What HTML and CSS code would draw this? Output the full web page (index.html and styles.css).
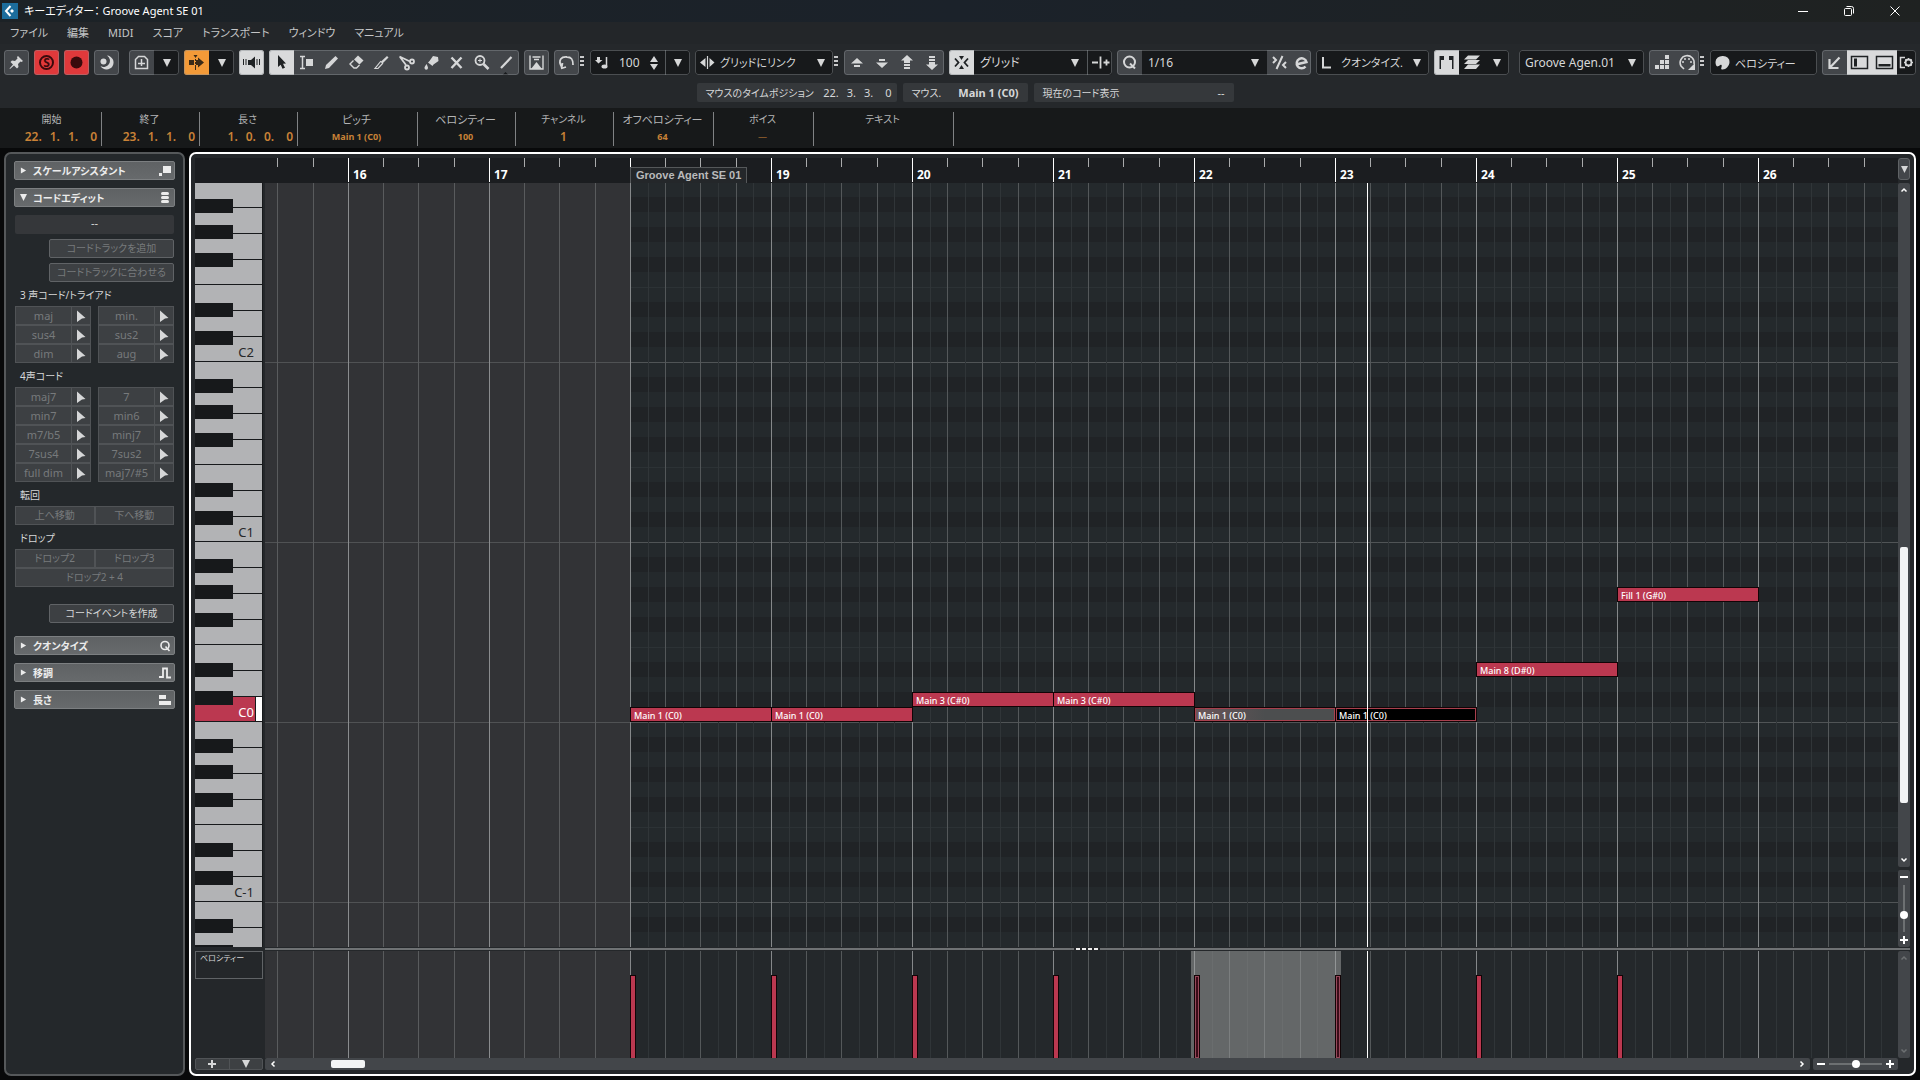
FILE: index.html
```html
<!DOCTYPE html>
<html lang="ja">
<head>
  <meta charset="UTF-8" />
  <meta name="viewport" content="width=device-width, initial-scale=1.0"/>
  <title>キーエディター： Groove Agent SE 01</title>
  <link rel="stylesheet" href="styles.css">
</head>
<body>

  <!-- Shared symbols -->
  <svg class="sprite" aria-hidden="true">
    <symbol id="down" viewBox="0 0 8 8"><path d="M0 0h8L4 8z"/></symbol>
    <symbol id="right" viewBox="0 0 8 8"><path d="M1 0.5L7 4 1 7.5z"/></symbol>
    <symbol id="pointer" viewBox="0 0 10 12"><path d="M1 0.500l8.500 7.500-3.500.5-5 3.500z"/></symbol>
    <symbol id="plus" viewBox="0 0 8 8"><path d="M3 0h2v3h3v2H5v3H3V5H0V3h3z"/></symbol>
    <symbol id="minus" viewBox="0 0 8 8"><path d="M0 3h8v2H0z"/></symbol>
    <symbol id="up-chev" viewBox="0 0 8 8"><path d="M1.5 5.5L4 3l2.500 2.500" fill="none" stroke="currentColor" stroke-width="1.500"/></symbol>
    <symbol id="down-chev" viewBox="0 0 8 8"><path d="M1.500 2.500L4 5l2.500-2.500" fill="none" stroke="currentColor" stroke-width="1.500"/></symbol>
  </svg>

  <header class="titlebar">
    <svg class="logo" viewBox="0 0 16 16">
      <rect width="16" height="16" fill="#1c6d9c"/>
      <path d="M8.500 3L4 8l4.500 5" fill="none" stroke="#fff" stroke-width="2"/>
      <path d="M10 6l2 2-2 2-2-2z" fill="#fff"/>
    </svg>
    <h1>キーエディター： Groove Agent SE 01</h1>
    <div class="window-buttons">
      <button aria-label="最小化"><svg viewBox="0 0 12 12"><path d="M1 6.500h10"/></svg></button>
      <button aria-label="元に戻す"><svg viewBox="0 0 12 12"><rect x="1.500" y="3.500" width="7" height="7" rx="1"/><path d="M3.500 1.500h5a2 2 0 0 1 2 2v5"/></svg></button>
      <button aria-label="閉じる"><svg viewBox="0 0 12 12"><path d="M1.500 1.500l9 9M10.500 1.500l-9 9"/></svg></button>
    </div>
  </header>

  <nav class="menubar">
    <a href="#">ファイル</a>
    <a href="#">編集</a>
    <a href="#">MIDI</a>
    <a href="#">スコア</a>
    <a href="#">トランスポート</a>
    <a href="#">ウィンドウ</a>
    <a href="#">マニュアル</a>
  </nav>

  <div class="toolbar">
    <div class="tool-row">
      <div class="group">
        <button aria-label="固定"><svg class="icon" viewBox="0 0 25 25"><path d="M14 6l5 5-1.500 1-1-.5-2.500 2.500.5 3-1.500 1.500-3-3L6 19l-.5-.5L9 14.500 6.500 12 8 10.500l3 .5L13.500 8.500 13 7z"/></svg></button>
      </div>
      <div class="group">
        <button class="red" aria-label="ソロ"><svg class="icon" viewBox="0 0 25 25"><circle cx="12.500" cy="12.500" r="6.500" fill="none" stroke="currentColor" stroke-width="2"/><text x="12.500" y="17" text-anchor="middle" font-size="12" font-weight="700">S</text></svg></button>
      </div>
      <div class="group">
        <button class="red" aria-label="録音"><svg class="icon" viewBox="0 0 25 25"><circle cx="12.500" cy="12.500" r="6"/></svg></button>
      </div>
      <div class="group">
        <button aria-label="レトロスペクティブ録音"><svg class="icon" viewBox="0 0 25 25"><path d="M13 5.500a7 7 0 1 1-6.500 10.500 6 6 0 0 0 6.500-10.500z"/><circle cx="9.500" cy="11.500" r="3"/></svg></button>
      </div>
      <div class="group group-spaced">
        <button aria-label="ビジビリティー"><svg class="icon" viewBox="0 0 25 25"><path d="M6.500 18.500v-9l3-3h6l3 3v9zM9 13.500h7M12.500 9v7" fill="none" stroke="currentColor" stroke-width="1.500"/></svg></button>
        <button class="dark" aria-label="開く"><svg class="tri"><use href="#down"/></svg></button>
      </div>
      <div class="group">
        <button class="orange" aria-label="自動スクロール"><svg class="icon" viewBox="0 0 25 25"><path d="M5 10h5v5H5zM14 10V7.500l6 5-6 5V15h-2v-5zM9.500 5h4l-2 3zM11 9h1v2h-1zM11 12h1v2h-1zM11 15h1v5h-1z"/></svg></button>
        <button class="dark" aria-label="開く"><svg class="tri"><use href="#down"/></svg></button>
      </div>
      <div class="group">
        <button class="on" aria-label="試聴"><svg class="icon" viewBox="0 0 25 25"><path d="M9 10h3l4-3.500v12L12 15H9zM4 9h1v6H4zM6.500 9h1v6h-1zM17.500 9h1v6h-1zM20 9h1v6h-1z"/></svg></button>
      </div>
      <div class="group">
        <button class="on" aria-label="オブジェクトの選択"><svg class="icon" viewBox="0 0 25 25"><path d="M9 5l8 8.500-3 .3 2 4-2.500 1-1.800-4L9 17z"/></svg></button>
        <button aria-label="範囲選択"><svg class="icon" viewBox="0 0 25 25"><path d="M6 6.500h5M8.500 6.500v12M6 18.500h5" fill="none" stroke="currentColor" stroke-width="1.500"/><rect x="12" y="9" width="7" height="7"/></svg></button>
        <button aria-label="鉛筆"><svg class="icon" viewBox="0 0 25 25"><path d="M6 19l1-4L16.500 6 19 8.500 10 18z"/></svg></button>
        <button aria-label="消しゴム"><svg class="icon" viewBox="0 0 25 25"><path d="M14 5.500l5.500 5-4 4-5.500-5z"/><path d="M9.500 10.500L6 14l4 4h2.500l3-3" fill="none" stroke="currentColor" stroke-width="1.400"/></svg></button>
        <button aria-label="トリム"><svg class="icon" viewBox="0 0 25 25"><path d="M18 6l1.500 1.500-6 6-2-1.500z"/><path d="M12 11l-6 7.500h3l5-5.500" fill="none" stroke="currentColor" stroke-width="1.200"/></svg></button>
        <button aria-label="はさみ"><svg class="icon" viewBox="0 0 25 25"><g fill="none" stroke="currentColor" stroke-width="1.800"><path d="M5.500 6.500L16 11.500M6 7l6 8"/><circle cx="18" cy="11.500" r="2"/><circle cx="13" cy="17.500" r="2"/></g></svg></button>
        <button aria-label="のり"><svg class="icon" viewBox="0 0 25 25"><path d="M14 6l5 1 .5 4-5 3.500-1 1.500-4.500-3.500 1.500-1.500zM7.500 14c-1.500 2.500-2 3-2 4a1.500 1.500 0 0 0 3.500 0c0-1-.5-2-1.500-4z"/></svg></button>
        <button aria-label="ミュート"><svg class="icon" viewBox="0 0 25 25"><path d="M7.500 7.500l10 10.500M17.500 7.500l-10 10.500" fill="none" stroke="currentColor" stroke-width="2.400"/></svg></button>
        <button aria-label="ズーム"><svg class="icon" viewBox="0 0 25 25"><g fill="none" stroke="currentColor"><circle cx="11" cy="10.500" r="4.500" stroke-width="1.800"/><path d="M14.500 14l5 5" stroke-width="2.600"/><path d="M9 10.500h4M11 8.500v4"/></g></svg></button>
        <button aria-label="ライン"><svg class="icon" viewBox="0 0 25 25"><path d="M7 18L17.500 7" stroke="currentColor" stroke-width="2.200"/><path d="M8.500 25l3-3 3 3z" fill="#17191b"/></svg></button>
      </div>
      <div class="group">
        <button aria-label="コントローラー"><svg class="icon" viewBox="0 0 25 25"><path d="M6 5.500v13.500h13V5.500M8.500 7h8M10 9.500h5" fill="none" stroke="currentColor" stroke-width="1.400"/><path d="M7 19l5.500-7 5.500 7z"/></svg></button>
      </div>
      <div class="group">
        <button aria-label="ループ"><svg class="icon" viewBox="0 0 25 25"><path d="M8 17.500c-5-8 0-11 5-10.500 5 0 6 3 6 8M7 18.500l5-1.500M7.500 18l1-5" fill="none" stroke="currentColor" stroke-width="1.800"/></svg></button>
      </div>
      <span class="dots"></span>

      <div class="group dark wide-velocity">
        <svg class="icon" viewBox="0 0 25 25"><path d="M7 7h3v3h2.500L8.500 13.500 5 10h2z"/><path d="M16.500 7v9" stroke="currentColor" stroke-width="1.500"/><ellipse cx="14.500" cy="16.500" rx="3" ry="2"/></svg>
        <input type="text" value="100" aria-label="挿入ベロシティー">
        <svg class="spin" viewBox="0 0 8 14"><path d="M4 0l4 6H0zM0 8h8l-4 6z"/></svg>
        <button class="dark split" aria-label="開く"><svg class="tri"><use href="#down"/></svg></button>
      </div>
      <div class="group dark select wide-link">
        <svg class="icon" viewBox="0 0 25 25"><path d="M12.500 6v13" stroke="currentColor" stroke-width="1.200"/><path d="M10.500 8v9L5 12.500zM14.500 8v9l5-4.500z"/></svg>
        <select class="kana" aria-label="長さクオンタイズ"><option>グリッドにリンク</option></select>
        <svg class="tri"><use href="#down"/></svg>
      </div>
      <span class="dots"></span>

      <div class="group">
        <button aria-label="上へ移動"><svg class="icon" viewBox="0 0 25 25"><path d="M7 13.500L13 8l6 5.500zM10 15h6v2h-6z"/></svg></button>
        <button aria-label="下へ移動"><svg class="icon" viewBox="0 0 25 25"><path d="M7 12.500h12L13 18zM10 9h6v2h-6z"/></svg></button>
        <button aria-label="1オクターブ上へ"><svg class="icon" viewBox="0 0 25 25"><path d="M7 10.500L13 5l6 5.500h-3V13h-6v-2.500zM10 14h6v2h-6zM10 17h6v2h-6z"/></svg></button>
        <button aria-label="1オクターブ下へ"><svg class="icon" viewBox="0 0 25 25"><path d="M7 14.500L13 20l6-5.500h-3V12h-6v2.500zM10 9h6v2h-6zM10 6h6v2h-6z"/></svg></button>
      </div>
      <div class="group dark select wide-snap">
        <button class="on" aria-label="スナップ"><svg class="icon" viewBox="0 0 25 25"><path d="M10 6h5l-2.500 4zM10 19h5l-2.500-4z"/><path d="M6 8.500l3.500 4L6 16.500M19 8.500l-3.500 4 3.500 4" fill="none" stroke="currentColor" stroke-width="1.800"/></svg></button>
        <select aria-label="スナップタイプ"><option>グリッド</option></select>
        <svg class="tri"><use href="#down"/></svg>
        <button class="dark split" aria-label="ゼロクロス"><svg class="icon" viewBox="0 0 25 25"><path d="M4 12.500h6M12.500 6.500v12M15.500 12.500h6M18.500 9.500v6" fill="none" stroke="currentColor" stroke-width="1.800"/></svg></button>
      </div>
      <div class="group dark select wide-quantize">
        <button class="plain" aria-label="クオンタイズを適用"><svg class="icon" viewBox="0 0 25 25"><circle cx="12.500" cy="12" r="5.500" fill="none" stroke="currentColor" stroke-width="2"/><path d="M13 13.500l5 5" stroke="currentColor" stroke-width="2"/></svg></button>
        <select aria-label="クオンタイズプリセット"><option>1/16</option></select>
        <svg class="tri"><use href="#down"/></svg>
        <button class="plain narrow" aria-label="ソフトクオンタイズ"><svg class="icon" viewBox="0 0 25 25"><path d="M15.500 6L9.500 19M6 7l3 3-3 3M19 12l-3 3 3 3" fill="none" stroke="currentColor" stroke-width="2"/></svg></button>
        <button class="plain narrow" aria-label="クオンタイズパネルを開く"><svg class="icon" viewBox="0 0 25 25"><path d="M7 14.500l10.500-2.500a5 5 0 1 0-1 4.500" fill="none" stroke="currentColor" stroke-width="2.400"/></svg></button>
      </div>
      <div class="group dark select wide-length">
        <svg class="icon" viewBox="0 0 25 25"><path d="M7 7v10.500h8" fill="none" stroke="currentColor" stroke-width="2"/></svg>
        <select class="kana" aria-label="長さ"><option>クオンタイズ.</option></select>
        <svg class="tri"><use href="#down"/></svg>
      </div>
      <div class="group dark">
        <button class="on" aria-label="パートの境界線"><svg class="icon" viewBox="0 0 25 25"><path d="M5.500 19V6H10v4H7v9zM19.500 19V6H15v4h3v9z"/></svg></button>
        <button aria-label="レイヤー"><svg class="icon" viewBox="0 0 25 25"><path d="M9 5.500h12l-4 4H5zM9 10h12l-4 4H5zM9 14.500h12l-4 4.500H5z"/></svg></button>
        <button aria-label="開く"><svg class="tri"><use href="#down"/></svg></button>
      </div>
      <div class="group dark select wide-part">
        <select aria-label="編集中のパート"><option>Groove Agen.01</option></select>
        <svg class="tri"><use href="#down"/></svg>
      </div>
      <div class="group">
        <button aria-label="ステップ入力"><svg class="icon" viewBox="0 0 25 25"><path d="M6 15h4v4H6zM11 15h4v4h-4zM16 15h4v4h-4zM11 10h4v4h-4zM16 10h4v4h-4zM16 5h4v4h-4z"/></svg></button>
        <button aria-label="MIDI入力"><svg class="icon" viewBox="0 0 25 25"><path d="M10 19l-3-3a7 7 0 1 1 13-2" fill="none" stroke="currentColor" stroke-width="1.600"/><circle cx="9" cy="12" r="1"/><circle cx="11" cy="9" r="1"/><circle cx="15" cy="9" r="1"/><circle cx="17" cy="12" r="1"/><path d="M21 13v7h-7z"/></svg></button>
      </div>
      <span class="dots"></span>

      <div class="group dark wide-colors">
        <svg class="icon" viewBox="0 0 25 25"><path d="M13 6a6.500 5.500 0 0 1 6.500 6c0 4-4 8-7.500 7.500-2-.5.500-3-.5-4.500-1.500-1-2 1.500-3.500 1.500S5.500 15 5.500 12A7 6 0 0 1 13 6z"/><circle cx="9" cy="17.500" r="1.500" fill="#17191b"/></svg>
        <input class="kana" type="text" value="ベロシティー" aria-label="イベントの色">
      </div>
      <div class="group zones">
        <button aria-label="下ゾーンで開く"><svg class="icon" viewBox="0 0 25 25"><path d="M17.500 7.500L8.500 17M7.500 9v9h9" fill="none" stroke="currentColor" stroke-width="2.200"/></svg></button>
        <button class="on" aria-label="左ゾーン"><svg class="icon" viewBox="0 0 25 25"><rect x="4.500" y="6.500" width="16" height="12" fill="none" stroke="currentColor" stroke-width="1.500"/><path d="M7 8.500h3v8H7z"/></svg></button>
        <button class="on" aria-label="下ゾーン"><svg class="icon" viewBox="0 0 25 25"><rect x="4.500" y="6.500" width="16" height="12" fill="none" stroke="currentColor" stroke-width="1.500"/><path d="M6.500 14h12v2.500h-12z"/></svg></button>
        <button class="dark setup" aria-label="ウィンドウレイアウトの設定"><svg class="icon" viewBox="4 0 19 25"><path d="M12 7.500H7.500v10H12" fill="none" stroke="currentColor" stroke-width="1.500"/><circle cx="15.500" cy="12.500" r="3" fill="none" stroke="currentColor" stroke-width="2"/><path d="M15.500 8v9M11 12.500h9M12.300 9.300l6.400 6.400M18.700 9.300l-6.400 6.400" stroke="currentColor" stroke-width="1.200"/><circle cx="15.500" cy="12.500" r="2" fill="#17191b"/></svg></button>
      </div>
    </div>

    <div class="status-row">
      <div class="status status-wide"><span class="label">マウスのタイムポジション</span><span class="pos"><span>22.</span><span>3.</span><span>3.</span><span>0</span></span></div>
      <div class="status status-mid"><span class="label">マウス.</span><b>Main 1 (C0)</b></div>
      <div class="status status-wide"><span class="label">現在のコード表示</span><span>--</span></div>
    </div>
  </div>

  <!-- Info line -->
  <dl class="info-line">
    <div class="w-time"><dt>開始</dt><dd class="pos"><span>22.</span><span>1.</span><span>1.</span><span>0</span></dd></div>
    <div class="w-time"><dt>終了</dt><dd class="pos"><span>23.</span><span>1.</span><span>1.</span><span>0</span></dd></div>
    <div class="w-time"><dt>長さ</dt><dd class="pos"><span>1.</span><span>0.</span><span>0.</span><span>0</span></dd></div>
    <div class="w-pitch"><dt class="big">ピッチ</dt><dd class="small">Main 1 (C0)</dd></div>
    <div class="w-time"><dt class="big">ベロシティー</dt><dd class="small">100</dd></div>
    <div class="w-time"><dt>チャンネル</dt><dd>1</dd></div>
    <div class="w-off"><dt class="big">オフベロシティー</dt><dd class="small">64</dd></div>
    <div class="w-off"><dt>ボイス</dt><dd class="none">—</dd></div>
    <div class="w-text"><dt>テキスト</dt><dd></dd></div>
  </dl>

  <main class="workspace">
    <aside class="inspector">
      <button class="section"><svg class="tri"><use href="#right"/></svg>スケールアシスタント<svg class="mark" viewBox="0 0 12 12"><path d="M4 1h8v7H4zM0 8h3v3H0z"/></svg></button>
      <button class="section"><svg class="tri"><use href="#down"/></svg>コードエディット<svg class="mark" viewBox="0 0 12 12"><rect x="2" y="0" width="8" height="3" rx="1.500"/><rect x="2" y="4" width="8" height="3" rx="1.500"/><rect x="2" y="8" width="8" height="3" rx="1.500"/></svg></button>

      <div class="chord">
        <div class="chord-name">--</div>
        <button class="wide" disabled>コードトラックを追加</button>
        <button class="wide" disabled>コードトラックに合わせる</button>

        <h2>3 声コード/トライアド</h2>
        <div class="pairs">
          <div class="cell"><button disabled>maj</button><button aria-label="maj を適用"><svg><use href="#pointer"/></svg></button></div>
          <div class="cell"><button disabled>min.</button><button aria-label="min を適用"><svg><use href="#pointer"/></svg></button></div>
          <div class="cell"><button disabled>sus4</button><button aria-label="sus4 を適用"><svg><use href="#pointer"/></svg></button></div>
          <div class="cell"><button disabled>sus2</button><button aria-label="sus2 を適用"><svg><use href="#pointer"/></svg></button></div>
          <div class="cell"><button disabled>dim</button><button aria-label="dim を適用"><svg><use href="#pointer"/></svg></button></div>
          <div class="cell"><button disabled>aug</button><button aria-label="aug を適用"><svg><use href="#pointer"/></svg></button></div>
        </div>

        <h2>4声コード</h2>
        <div class="pairs">
          <div class="cell"><button disabled>maj7</button><button aria-label="maj7 を適用"><svg><use href="#pointer"/></svg></button></div>
          <div class="cell"><button disabled>7</button><button aria-label="7 を適用"><svg><use href="#pointer"/></svg></button></div>
          <div class="cell"><button disabled>min7</button><button aria-label="min7 を適用"><svg><use href="#pointer"/></svg></button></div>
          <div class="cell"><button disabled>min6</button><button aria-label="min6 を適用"><svg><use href="#pointer"/></svg></button></div>
          <div class="cell"><button disabled>m7/b5</button><button aria-label="m7/b5 を適用"><svg><use href="#pointer"/></svg></button></div>
          <div class="cell"><button disabled>minj7</button><button aria-label="minj7 を適用"><svg><use href="#pointer"/></svg></button></div>
          <div class="cell"><button disabled>7sus4</button><button aria-label="7sus4 を適用"><svg><use href="#pointer"/></svg></button></div>
          <div class="cell"><button disabled>7sus2</button><button aria-label="7sus2 を適用"><svg><use href="#pointer"/></svg></button></div>
          <div class="cell"><button disabled>full dim</button><button aria-label="full dim を適用"><svg><use href="#pointer"/></svg></button></div>
          <div class="cell"><button disabled>maj7/#5</button><button aria-label="maj7/#5 を適用"><svg><use href="#pointer"/></svg></button></div>
        </div>

        <h2>転回</h2>
        <div class="joined"><button disabled>上へ移動</button><button disabled>下へ移動</button></div>

        <h2>ドロップ</h2>
        <div class="joined"><button disabled>ドロップ2</button><button disabled>ドロップ3</button><button class="full" disabled>ドロップ2 + 4</button></div>

        <button class="wide create">コードイベントを作成</button>
      </div>

      <button class="section"><svg class="tri"><use href="#right"/></svg>クオンタイズ<svg class="mark" viewBox="0 0 12 12"><circle cx="6" cy="5.500" r="4" fill="none" stroke="currentColor" stroke-width="1.600"/><path d="M6.500 6.500l4 4.500" stroke="currentColor" stroke-width="1.600"/></svg></button>
      <button class="section"><svg class="tri"><use href="#right"/></svg>移調<svg class="mark" viewBox="0 0 12 12"><path d="M0 10h4V1.500h4V10.500h4" fill="none" stroke="currentColor" stroke-width="1.800"/></svg></button>
      <button class="section"><svg class="tri"><use href="#right"/></svg>長さ<svg class="mark" viewBox="0 0 12 12"><path d="M0 1h7v4H0zM0 7h12v4H0z"/></svg></button>
    </aside>

    <section class="editor">
      <!-- Ruler -->
      <div class="ruler">
        <div class="bar lead"></div>
        <div class="bar">16</div>
        <div class="bar">17</div>
        <div class="bar part-start"><span class="part-name">Groove Agent SE 01</span></div>
        <div class="bar">19</div>
        <div class="bar">20</div>
        <div class="bar">21</div>
        <div class="bar">22</div>
        <div class="bar">23</div>
        <div class="bar">24</div>
        <div class="bar">25</div>
        <div class="bar rest">26</div>
      </div>
      <button class="ruler-menu" aria-label="ルーラーメニュー"><svg><use href="#down"/></svg></button>

      <!-- Piano keyboard -->
      <div class="keyboard">
        <div class="octave first"><span>C2</span></div>
        <div class="octave"><span>C1</span></div>
        <div class="octave playing"><i class="pressed"></i><i class="velocity"></i><span>C0</span></div>
        <div class="octave"><span>C-1</span></div>
        <div class="octave last"></div>
      </div>

      <div class="notes">
        <div class="before"></div>
        <div class="inside"></div>
        <div class="note n18">Main 1 (C0)</div>
        <div class="note n19">Main 1 (C0)</div>
        <div class="note n20">Main 3 (C#0)</div>
        <div class="note n21">Main 3 (C#0)</div>
        <div class="note n22 selected">Main 1 (C0)</div>
        <div class="note n23 current">Main 1 (C0)</div>
        <div class="note n24">Main 8 (D#0)</div>
        <div class="note n25">Fill 1 (G#0)</div>
        <div class="playhead"></div>
      </div>

      <div class="side-scroll">
        <div class="vscroll">
          <svg><use href="#up-chev"/></svg>
          <div class="thumb"></div>
          <svg><use href="#down-chev"/></svg>
        </div>
        <div class="vzoom">
          <svg><use href="#minus"/></svg>
          <input type="range" min="0" max="100" value="67" aria-label="垂直ズーム">
          <svg><use href="#plus"/></svg>
        </div>
      </div>

      <div class="splitter"></div>

      <!-- Velocity lane -->
      <div class="lane-head">ベロシティー</div>
      <div class="lane">
        <div class="before"></div>
        <div class="inside"></div>
        <div class="selection"></div>
        <div class="stick n18"></div>
        <div class="stick n19"></div>
        <div class="stick n20"></div>
        <div class="stick n21"></div>
        <div class="stick n22 hollow"></div>
        <div class="stick n23 hollow"></div>
        <div class="stick n24"></div>
        <div class="stick n25"></div>
        <div class="playhead"></div>
      </div>
      <div class="lane-scroll"><svg><use href="#up-chev"/></svg><svg><use href="#down-chev"/></svg></div>

      <div class="lane-buttons">
        <button aria-label="レーンを追加"><svg><use href="#plus"/></svg></button>
        <button aria-label="レーンメニュー"><svg><use href="#down"/></svg></button>
      </div>
      <div class="bottom-scroll">
        <div class="hscroll">
          <svg class="turn"><use href="#up-chev"/></svg>
          <div class="thumb"></div>
          <svg class="turn"><use href="#down-chev"/></svg>
        </div>
        <div class="hzoom">
          <svg><use href="#minus"/></svg>
          <input type="range" min="0" max="100" value="51" aria-label="水平ズーム">
          <svg><use href="#plus"/></svg>
        </div>
      </div>
    </section>
  </main>

</body>
</html>
```
FILE: styles.css
```css
* {
  margin: 0;
  padding: 0;
  box-sizing: border-box;
}

body {
  min-height: 100vh;
  display: flex;
  flex-direction: column;
  background: #08090a;
  color: #d6d7d8;
  font-family: "Noto Sans", "Noto Sans CJK JP", sans-serif;
  font-size: 11px;
  line-height: 16px;
  font-feature-settings: "palt";
  overflow: hidden;
}

button,
input,
select {
  font: inherit;
  font-feature-settings: inherit;
  color: inherit;
  background: none;
  border: none;
  border-radius: 0;
  appearance: none;
  outline: none;
}

svg {
  display: block;
  fill: currentColor;
}

.sprite {
  position: absolute;
  width: 0;
  height: 0;
}

/* Title and menu */
.titlebar {
  height: 22px;
  display: flex;
  align-items: center;
  gap: 6px;
  padding: 0 2px;
  background: linear-gradient(90deg, #1c2226, #1b222a 50%, #1f2221);
}

.logo {
  width: 16px;
  height: 16px;
}

.titlebar h1 {
  color: #fff;
  font-size: 11px;
  font-weight: 400;
}

.window-buttons {
  display: flex;
  margin-left: auto;
  color: #fff;
}

.window-buttons button {
  width: 46px;
  height: 22px;
  display: grid;
  place-items: center;
}

.window-buttons svg {
  width: 12px;
  height: 12px;
  fill: none;
  stroke: currentColor;
}

.menubar {
  height: 22px;
  display: flex;
  align-items: center;
  gap: 19px;
  padding-left: 10px;
  background: #232629;
}

.menubar a {
  color: #c4c5c6;
  text-decoration: none;
}

/* Toolbar */
.toolbar {
  display: flex;
  flex-direction: column;
  gap: 8px;
  padding: 6px 4px;
  background: #25282b;
}

.tool-row {
  display: flex;
  gap: 5px;
  height: 25px;
}

.group {
  position: relative;
  display: flex;
  align-items: center;
  flex: none;
  height: 25px;
  background: #43464a;
  border-radius: 3px;
  overflow: hidden;
}

.group::after {
  content: "";
  position: absolute;
  inset: 0;
  border: 1px solid rgba(140, 144, 148, 0.45);
  border-radius: 3px;
  pointer-events: none;
}

.group-spaced {
  margin-left: 5px;
}

.group button {
  width: 25px;
  height: 25px;
  display: grid;
  place-items: center;
  flex: none;
}

.icon {
  width: 25px;
  height: 25px;
  flex: none;
}

.tri {
  width: 8px;
  height: 8px;
  flex: none;
}

.dark,
.group .dark {
  background: #17191b;
}

.group .plain {
  background: #43464a;
}

.group .narrow {
  width: 22px;
}

.group .on {
  background: #d9dadb;
  color: #1f2224;
}

.group .red {
  background: #e0393b;
  color: #3a0a0c;
}

.group .orange {
  background: #f39a38;
  color: #3a2a17;
}

.group .split {
  border-left: 1px solid #55595c;
}

.dots {
  width: 4px;
  height: 12px;
  margin: 6px 1px 0 -4px;
  background: repeating-linear-gradient(#c9cacb 0 2px, transparent 2px 4px);
}

.group input,
.group select {
  flex: 1;
  min-width: 0;
  height: 25px;
  font-size: 12px;
}

.group .kana {
  font-size: 11px;
}

.select .tri {
  margin-right: 8px;
}

.spin {
  width: 8px;
  height: 14px;
  margin-right: 7px;
}

.wide-velocity {
  width: 100px;
}

.wide-velocity input {
  padding-left: 4px;
}

.wide-link {
  width: 138px;
}

.wide-snap {
  width: 163px;
}

.wide-quantize {
  width: 194px;
}

.wide-length {
  width: 113px;
}

.wide-snap select,
.wide-quantize select,
.wide-part select {
  padding-left: 6px;
}

.wide-part {
  width: 125px;
  margin-left: 5px;
}

.wide-colors {
  width: 107px;
}

.group .setup,
.setup .icon {
  width: 19px;
}

.zones {
  margin-left: auto;
}

.status-row {
  display: flex;
  justify-content: center;
  gap: 6px;
  padding-left: 10px;
}

.status {
  height: 19px;
  display: flex;
  align-items: center;
  justify-content: space-between;
  padding: 0 9px;
  background: #35383b;
  border-radius: 2px;
}

.status .label {
  font-size: 10px;
}

.status-wide {
  width: 200px;
}

.status-wide .pos {
  margin-right: -4px;
}

.status-mid {
  width: 125px;
}

.pos {
  display: flex;
  gap: 8px;
  justify-content: flex-end;
}

.pos span:last-child {
  margin-left: 4px;
}

/* Info line */
.info-line {
  height: 40px;
  display: flex;
  padding: 4px 4px 2px;
  background: #17191a;
}

.info-line > div {
  border-right: 1px solid #808284;
  padding-right: 2px;
  text-align: center;
  color: #b4b5b6;
}

.info-line dt {
  font-size: 10px;
  line-height: 15px;
}

.info-line .big {
  font-size: 11px;
}

.info-line dd {
  color: #c98237;
  font-size: 12px;
  font-weight: 600;
  line-height: 20px;
}

.info-line .pos {
  padding-right: 2px;
}

.info-line .small {
  font-size: 9px;
  font-weight: 700;
}

.info-line .none {
  font-size: 9px;
  font-weight: 400;
}

.w-time {
  width: 98px;
}

.w-pitch {
  width: 120px;
}

.w-off {
  width: 100px;
}

.w-text {
  width: 140px;
}

/* Workspace */
.workspace {
  flex: 1;
  display: flex;
  gap: 4px;
  padding: 4px;
}

.inspector {
  width: 181px;
  padding: 7px 8px;
  border: 2px solid #55585a;
  border-radius: 7px;
  background: #24282b;
}

.section {
  width: 100%;
  height: 19px;
  display: flex;
  align-items: center;
  gap: 6px;
  margin-bottom: 8px;
  padding: 0 3px 0 5px;
  border: 1px solid #7c7f81;
  border-radius: 2px;
  background: linear-gradient(#5f6264, #676a6c);
  color: #ececec;
  font-size: 10px;
  font-weight: 600;
}

.section .tri {
  width: 7px;
  height: 7px;
}

.mark {
  width: 12px;
  height: 12px;
  margin-left: auto;
}

.chord {
  display: flex;
  flex-direction: column;
  padding: 0 1px;
  margin-bottom: 13px;
}

.chord-name {
  height: 19px;
  margin-bottom: 5px;
  background: #35373a;
  border-radius: 2px;
  text-align: center;
}

.chord button {
  height: 19px;
  background: #3d4043;
  border: 1px solid #505356;
  color: #d6d7d8;
  line-height: 15px;
}

.chord button:disabled {
  color: #777a7c;
}

.chord .wide {
  align-self: flex-end;
  width: 125px;
  margin-bottom: 5px;
  border-color: #606366;
  border-radius: 2px;
  font-size: 10px;
}

.chord .wide + h2 {
  margin-top: -5px;
}

.chord .create {
  margin: 17px 0 0;
}

.chord h2 {
  height: 24px;
  padding-left: 5px;
  font-size: 10px;
  font-weight: 400;
  line-height: 27px;
}

.pairs {
  display: grid;
  grid-template-columns: 1fr 1fr;
  column-gap: 7px;
}

.cell {
  display: flex;
}

.cell button:first-child {
  flex: 1;
  border-right: none;
}

.cell button:last-child {
  width: 20px;
  display: grid;
  place-items: center;
}

.cell svg {
  width: 10px;
  height: 12px;
}

.joined {
  display: grid;
  grid-template-columns: 1fr 1fr;
}

.joined button {
  font-size: 10px;
}

.joined .full {
  grid-column: 1 / 3;
}

/* Editor */
.editor {
  flex: 1;
  min-width: 0;
  display: grid;
  grid-template-columns: 68px 1fr 12px;
  grid-template-rows: 25px 1fr 4px 107px 12px;
  padding: 4px;
  border: 2px solid #fff;
  border-radius: 7px;
  background: #24272a;
}

.ruler {
  grid-column: 1 / 3;
  display: flex;
  padding-left: 70px;
  background: #1b1d20;
  overflow: hidden;
}

.bar {
  width: 141px;
  flex: none;
  padding: 8px 0 0 5px;
  color: #fff;
  font-size: 12px;
  font-weight: 700;
  line-height: 17px;
  background:
    linear-gradient(#fff, #fff) 0 0 / 1px 24px no-repeat,
    linear-gradient(90deg, transparent 35px, #aaabac 35px 36px, transparent 36px 70px, #aaabac 70px 71px, transparent 71px 106px, #aaabac 106px 107px, transparent 107px) 0 0 / 141px 9px no-repeat;
}

.bar.lead {
  width: 83px;
  background-position: -141px 0, right 0 top 0;
}

.bar.rest {
  flex: 1;
}

.bar.part-start {
  display: flex;
  align-items: flex-end;
  padding: 0;
  background-size: 1px 9px, 141px 9px;
}

.part-name {
  height: 16px;
  padding: 0 5px;
  border: 1px solid #55585a;
  border-bottom: none;
  background: #24272a;
  color: #b9babb;
  font-family: "Liberation Sans", sans-serif;
  font-size: 11px;
  font-weight: 700;
  line-height: 15px;
}

.ruler-menu {
  height: 22px;
  display: grid;
  place-items: center;
  border: 1px solid #606366;
  border-radius: 3px;
  background: #43464a;
}

.ruler-menu svg {
  width: 7px;
  height: 7px;
}

.keyboard {
  grid-row: 2;
  grid-column: 1;
  width: 68px;
  display: flex;
  flex-direction: column;
  overflow: hidden;
  border-right: 1px solid #17191b;
}

.octave {
  position: relative;
  flex: none;
  height: 180px;
  background:
    linear-gradient(transparent 17px, #17191b 17px 31px, transparent 31px 43px, #17191b 43px 57px, transparent 57px 71px, #17191b 71px 85px, transparent 85px 121px, #17191b 121px 135px, transparent 135px 149px, #17191b 149px 163px, transparent 163px) left bottom / 38px 180px no-repeat,
    linear-gradient(#b2b3b5 25px, #17191b 25px 26px, #b2b3b5 26px 51px, #17191b 51px 52px, #b2b3b5 52px 77px, #17191b 77px 78px, #b2b3b5 78px 102px, #17191b 102px 103px, #b2b3b5 103px 128px, #17191b 128px 129px, #b2b3b5 129px 154px, #17191b 154px 155px, #b2b3b5 155px 179px, #17191b 179px) left bottom / 100% 180px no-repeat;
}

.octave.first {
  height: 179px;
}

.octave.last {
  flex: 1;
  background-position: left top;
}

.octave span {
  position: absolute;
  right: 8px;
  bottom: 1px;
  color: #26282a;
  font-size: 13px;
  line-height: 17px;
}

.octave.playing span {
  color: #fff;
}

/* White key with the notch of the black key above it */
.pressed {
  position: absolute;
  left: 0;
  bottom: 1px;
  width: 60px;
  height: 24px;
  background: #bb3850;
  clip-path: polygon(38px 0, 100% 0, 100% 100%, 0 100%, 0 8px, 38px 8px);
}

.velocity {
  position: absolute;
  right: 0;
  bottom: 1px;
  width: 7px;
  height: 24px;
  border-left: 1px solid #17191b;
  background: #fff;
}

.notes,
.lane {
  grid-column: 2;
  position: relative;
  display: flex;
  margin-left: 2px;
  overflow: hidden;
}

.notes {
  grid-row: 2;
}

.lane {
  grid-row: 4;
}

.before {
  width: 365px;
}

.inside {
  flex: 1;
}

.notes .before {
  background:
    linear-gradient(90deg, #8a8c8e 1px, transparent 1px 35px, #595b5d 35px 36px, transparent 36px 70px, #595b5d 70px 71px, transparent 71px 106px, #595b5d 106px 107px, transparent 107px) right top / 141px 100%,
    linear-gradient(#505254 1px, transparent 1px) 0 -1px / 100% 180px,
    #323336;
}

.notes .inside {
  background:
    linear-gradient(90deg, #85888a 1px, transparent 1px 18px, #303538 18px 19px, transparent 19px 35px, #54585a 35px 36px, transparent 36px 53px, #303538 53px 54px, transparent 54px 70px, #54585a 70px 71px, transparent 71px 88px, #303538 88px 89px, transparent 89px 106px, #54585a 106px 107px, transparent 107px 123px, #303538 123px 124px, transparent 124px) left top / 141px 100%,
    linear-gradient(#505456 1px, #24292c 1px 15px, #202326 15px 30px, #24292c 30px 45px, #202326 45px 60px, #24292c 60px 75px, #202326 75px 90px, #24292c 90px 105px, #2c3235 105px 106px, #24292c 106px 120px, #202326 120px 135px, #24292c 135px 150px, #202326 150px 165px, #24292c 165px) 0 -1px / 100% 180px;
}

.lane .before {
  background:
    linear-gradient(90deg, #8a8c8e 1px, transparent 1px 35px, #595b5d 35px 36px, transparent 36px 70px, #595b5d 70px 71px, transparent 71px 106px, #595b5d 106px 107px, transparent 107px) right top / 141px 100%,
    #323336;
}

.lane .inside {
  background:
    linear-gradient(90deg, #85888a 1px, transparent 1px 18px, #303538 18px 19px, transparent 19px 35px, #54585a 35px 36px, transparent 36px 53px, #303538 53px 54px, transparent 54px 70px, #54585a 70px 71px, transparent 71px 88px, #303538 88px 89px, transparent 89px 106px, #54585a 106px 107px, transparent 107px 123px, #303538 123px 124px, transparent 124px) left top / 141px 100%,
    #24282b;
}

/* One bar is 141px wide, one semitone 15px high */
.n18 { left: 365px; top: 524px; }
.n19 { left: 506px; top: 524px; }
.n20 { left: 647px; top: 509px; }
.n21 { left: 788px; top: 509px; }
.n22 { left: 929px; top: 524px; }
.n23 { left: 1070px; top: 524px; }
.n24 { left: 1211px; top: 479px; }
.n25 { left: 1352px; top: 404px; }

.note {
  position: absolute;
  width: 142px;
  height: 15px;
  padding-left: 3px;
  border: 1px solid #120406;
  background: #bb3850;
  color: #fff;
  font-size: 9px;
  font-weight: 500;
  line-height: 15px;
}

.note.selected,
.note.current {
  background: linear-gradient(90deg, #6b5659, #4c4e4f 50%);
  box-shadow: inset 0 0 0 1px #a8404e;
}

.note.current {
  background: #000;
}

.playhead {
  position: absolute;
  left: 1102px;
  top: 0;
  bottom: 0;
  width: 1px;
  background: #fff;
}

.stick {
  position: absolute;
  top: 24px;
  bottom: 0;
  width: 6px;
  border: 1px solid #120406;
  border-bottom: none;
  background: #bb3850;
}

.stick.hollow {
  background: #3a0c18;
  box-shadow: inset 0 0 0 1px #96485a;
}

.selection {
  position: absolute;
  left: 926px;
  top: 0;
  bottom: 0;
  width: 150px;
  background: rgba(160, 161, 162, 0.52);
}

.splitter {
  grid-row: 3;
  grid-column: 2 / 4;
  height: 2px;
  margin: 1px 0 1px 2px;
  background:
    linear-gradient(#24272a, #24272a) 809px 0 / 2px 2px no-repeat,
    repeating-linear-gradient(90deg, #eee 0 4px, #24272a 4px 6px) 811px 0 / 24px 2px no-repeat,
    #6f7274;
}

.lane-head {
  grid-row: 4;
  grid-column: 1;
  height: 28px;
  padding-left: 4px;
  border: 1px solid #606366;
  font-size: 8px;
  line-height: 12px;
}

/* Scroll bars */
.side-scroll {
  grid-row: 2;
  grid-column: 3;
  display: flex;
  flex-direction: column;
  gap: 3px;
}

.vscroll,
.vzoom,
.lane-scroll {
  display: flex;
  flex-direction: column;
  align-items: center;
  justify-content: space-between;
  padding: 3px 0;
  border-radius: 2px;
  background: #43464a;
}

.lane-scroll {
  grid-row: 4;
  grid-column: 3;
}

.vscroll svg,
.vzoom svg,
.hscroll svg,
.hzoom svg,
.lane-scroll svg {
  width: 8px;
  height: 8px;
  color: #fff;
  flex: none;
}

.lane-scroll svg {
  color: #6d7072;
}

.vscroll {
  flex: 1;
}

.vscroll .thumb {
  width: 8px;
  height: 256px;
  margin: 353px 0 auto;
  border-radius: 2px;
  background: #f3f4f5;
}

.vzoom {
  height: 77px;
}

.vzoom input {
  width: 8px;
  height: 47px;
  writing-mode: vertical-lr;
  background: linear-gradient(#6d7072, #6d7072) center / 2px 100% no-repeat;
}

input[type="range"]::-webkit-slider-thumb {
  appearance: none;
  width: 8px;
  height: 8px;
  border-radius: 50%;
  background: #fff;
}

.lane-buttons {
  grid-row: 5;
  grid-column: 1;
  display: flex;
  border: 1px solid #505356;
  border-radius: 2px;
  background: #3d4043;
}

.lane-buttons button {
  flex: 1;
  display: grid;
  place-items: center;
}

.lane-buttons button + button {
  border-left: 1px solid #505356;
}

.lane-buttons svg {
  width: 8px;
  height: 8px;
}

.bottom-scroll {
  grid-row: 5;
  grid-column: 2;
  display: flex;
  gap: 3px;
  padding-left: 2px;
}

.hscroll,
.hzoom {
  display: flex;
  align-items: center;
  padding: 0 4px;
  border-radius: 2px;
  background: #43464a;
}

.hscroll {
  flex: 1;
}

.hscroll .thumb {
  width: 34px;
  height: 8px;
  margin: 0 auto 0 54px;
  border-radius: 2px;
  background: #f3f4f5;
}

.turn {
  transform: rotate(-90deg);
}

.hzoom {
  width: 85px;
  gap: 4px;
}

.hzoom input {
  flex: 1;
  min-width: 0;
  height: 8px;
  background: linear-gradient(#6d7072, #6d7072) center / 100% 2px no-repeat;
}
```
